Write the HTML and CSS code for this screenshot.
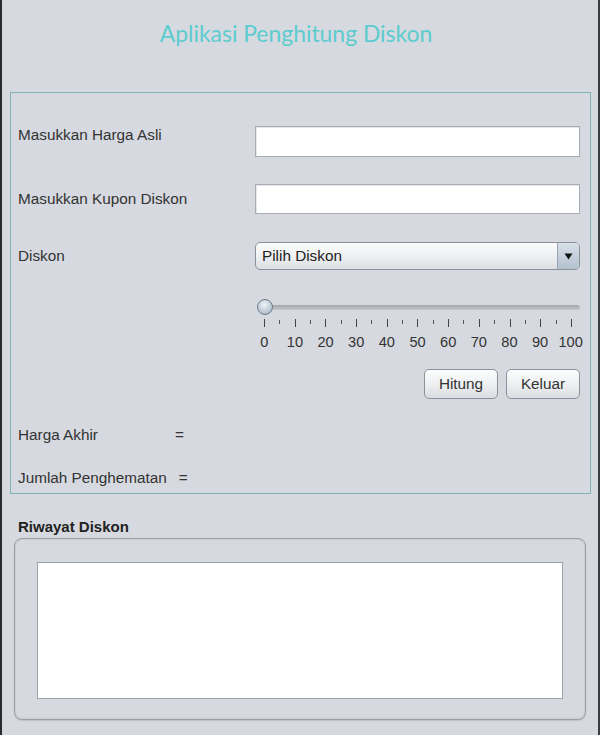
FILE: index.html
```html
<!DOCTYPE html>
<html>
<head>
<meta charset="utf-8">
<link rel="stylesheet" href="styles.css">
</head>
<body>
<div class="app">
  <div class="title">Aplikasi Penghitung Diskon</div>
  <div class="panel">
    <div class="row r1">
      <span class="label top">Masukkan Harga Asli</span>
      <div class="field h31"></div>
    </div>
    <div class="row r2">
      <span class="label">Masukkan Kupon Diskon</span>
      <div class="field h30"></div>
    </div>
    <div class="row r3">
      <span class="label">Diskon</span>
      <div class="combo">
        <span class="combo-text">Pilih Diskon</span>
        <span class="combo-btn"><svg width="9" height="7" viewBox="0 0 9 7"><path d="M0.5 0.5 H8.5 L4.5 6.5 Z" fill="#111"/></svg></span>
      </div>
    </div>
    <div class="row r4">
      <span></span>
      <div class="slider">
        <div class="track-row">
          <div class="track"></div>
          <div class="thumb"></div>
        </div>
        <div class="ticks">
          <i class="maj"></i><i></i><i class="maj"></i><i></i><i class="maj"></i><i></i><i class="maj"></i><i></i><i class="maj"></i><i></i><i class="maj"></i><i></i><i class="maj"></i><i></i><i class="maj"></i><i></i><i class="maj"></i><i></i><i class="maj"></i><i></i><i class="maj"></i>
        </div>
        <div class="nums">
          <span>0</span><span>10</span><span>20</span><span>30</span><span>40</span><span>50</span><span>60</span><span>70</span><span>80</span><span>90</span><span>100</span>
        </div>
      </div>
    </div>
    <div class="buttons">
      <button class="btn">Hitung</button>
      <button class="btn">Keluar</button>
    </div>
    <div class="result r6"><span class="rlabel w1">Harga Akhir</span><span>=</span></div>
    <div class="result r7"><span class="rlabel">Jumlah Penghematan</span><span class="eq2">=</span></div>
  </div>
  <div class="hist-label">Riwayat Diskon</div>
  <div class="hist-box">
    <div class="hist-area"></div>
  </div>
</div>
</body>
</html>
```

FILE: styles.css
```css
html, body {
  margin: 0;
  padding: 0;
  background: #d6d9df;
}
.app {
  box-sizing: border-box;
  width: 600px;
  height: 735px;
  border-left: 2px solid #2a2b2e;
  border-right: 2px solid #3a3c40;
  padding: 0 7px 0 8px;
  background: #d6d9df;
  font-family: "Liberation Sans", Arial, sans-serif;
  font-size: 15.3px;
  color: #333;
  overflow: hidden;
}
.title {
  box-sizing: border-box;
  height: 92px;
  padding-top: 19px;
  padding-right: 9px;
  text-align: center;
  font-family: Lato, "Open Sans", sans-serif;
  font-size: 22.9px;
  line-height: 28px;
  color: #5ccccf;
}
.panel {
  box-sizing: border-box;
  height: 402px;
  border: 1px solid #7fb6b3;
  padding: 33px 10px 0 7px;
  display: flex;
  flex-direction: column;
}
.row {
  display: grid;
  grid-template-columns: 237px minmax(0, 1fr);
}
.r2 { margin-top: 27px; }
.r3 { margin-top: 28px; }
.r4 { margin-top: 29px; }
.label {
  line-height: 18px;
  align-self: center;
}
.label.top { align-self: start; }
.field {
  box-sizing: border-box;
  background: #fff;
  border: 1px solid #a9adb3;
  box-shadow: inset 1px 1px 0 #e4e6e9;
}
.h31 { height: 31px; }
.h30 { height: 30px; }
.combo {
  box-sizing: border-box;
  height: 28px;
  border: 1px solid #8b9199;
  border-radius: 5px;
  background: linear-gradient(#fbfbfc, #eef0f2 50%, #dcdfe3);
  display: flex;
  align-items: center;
  overflow: hidden;
}
.combo-text {
  flex: 1;
  padding-left: 6px;
  line-height: 18px;
  color: #222;
}
.combo-btn {
  width: 21px;
  align-self: stretch;
  border-left: 1px solid #9aa4b0;
  background: linear-gradient(#d8e0e8, #b3c1cf);
  display: flex;
  align-items: center;
  justify-content: center;
}
.slider {
  min-width: 0;
  display: flex;
  flex-direction: column;
}
.track-row {
  position: relative;
  height: 16px;
  display: flex;
  align-items: center;
}
.track {
  margin-left: 2px;
  flex: 1;
  height: 5px;
  border-radius: 3px;
  background: linear-gradient(#a4a8ae, #c4c7cc);
}
.thumb {
  position: absolute;
  left: 2px;
  top: 0;
  box-sizing: border-box;
  width: 16px;
  height: 16px;
  border-radius: 50%;
  border: 1px solid #6f7c8a;
  background: radial-gradient(circle at 45% 35%, #eef2f6, #b5c3d1 70%, #93a3b4);
}
.ticks {
  margin: 4px 0 0 9px;
  width: 308px;
  height: 8px;
  display: flex;
  justify-content: space-between;
  align-items: flex-start;
}
.ticks i {
  display: block;
  width: 1px;
  height: 4px;
  margin-top: 1px;
  background: #555;
}
.ticks i.maj {
  height: 8px;
  margin-top: 0;
  background: #444;
}
.nums {
  margin: 7px 0 0 -6px;
  width: 337px;
  display: grid;
  grid-template-columns: repeat(11, 1fr);
  font-size: 14.6px;
  line-height: 16px;
  text-align: center;
  color: #333;
  white-space: nowrap;
}
.buttons {
  margin-top: 19px;
  display: flex;
  justify-content: flex-end;
  gap: 8px;
}
.btn {
  box-sizing: border-box;
  width: 74px;
  height: 30px;
  border: 1px solid #8c9299;
  border-radius: 5px;
  background: linear-gradient(#fdfdfd, #eceef0 55%, #d9dce0);
  font-family: "Liberation Sans", Arial, sans-serif;
  font-size: 15.3px;
  color: #333;
  padding: 0;
}
.result {
  display: flex;
  line-height: 18px;
}
.r6 { margin-top: 27px; }
.r7 { margin-top: 25px; }
.rlabel.w1 { width: 157px; }
.eq2 { margin-left: 12px; }
.hist-label {
  margin: 24px 0 0 8px;
  font-weight: bold;
  font-size: 15px;
  line-height: 18px;
  color: #222;
  letter-spacing: 0;
}
.hist-box {
  box-sizing: border-box;
  margin: 2px 0 0 4px;
  width: 572px;
  height: 182px;
  border: 1px solid #9a9fa6;
  border-radius: 8px;
  box-shadow: inset 0 0 2px #b4b8be, 0 1px 1px #bfc3c8;
  padding: 23px 22px 20px 22px;
}
.hist-area {
  box-sizing: border-box;
  height: 137px;
  background: #fff;
  border: 1px solid #9ea3aa;
}
```
